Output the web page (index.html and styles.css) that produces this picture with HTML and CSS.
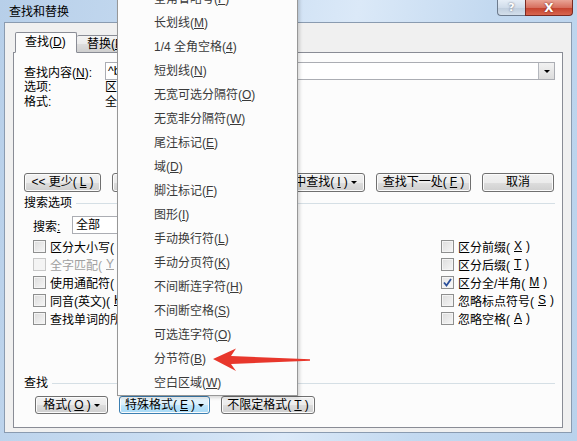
FILE: index.html
```html
<!DOCTYPE html>
<html lang="zh-CN">
<head>
  <meta charset="UTF-8">
  <title>查找和替换</title>
  <link rel="stylesheet" href="styles.css">
</head>
<body>
  <div class="window">
    <div class="titlebar">
      <span class="title">查找和替换</span>
      <div class="caption">
        <span class="cap help">?</span>
        <span class="cap close">X</span>
      </div>
    </div>

    <div class="client">
      <div class="tabs">
        <span class="tab active">查找(<u>D</u>)</span>
        <span class="tab">替换(<u>P</u>)</span>
        <span class="tab">定位(<u>G</u>)</span>
      </div>
      <div class="panel">
        <div class="find-row">
          <span class="lbl">查找内容(<u>N</u>):</span>
          <div class="combo">
            <span class="combo-text">^b</span>
            <span class="combo-btn"><i class="tri"></i></span>
          </div>
        </div>
        <div class="info">
          <div class="info-row"><span class="lbl">选项:</span><span>区分全/半角</span></div>
          <div class="info-row"><span class="lbl">格式:</span><span>全部</span></div>
        </div>

        <div class="btn-row main-btns">
          <button class="btn b-less">&lt;&lt; 更少(<u>L</u>)</button>
          <button class="btn b-read">阅读突出显示(<u>R</u>) <i class="tri"></i></button>
          <button class="btn b-in">在以下项中查找(<u>I</u>) <i class="tri"></i></button>
          <button class="btn b-next">查找下一处(<u>F</u>)</button>
          <button class="btn b-cancel">取消</button>
        </div>

        <div class="group-head first"><span>搜索选项</span></div>
        <div class="search-row">
          <span class="search-lbl">搜索<u>:</u></span>
          <div class="select">全部</div>
        </div>

        <div class="checks">
          <div class="col">
            <div class="chk"><span class="box"></span>区分大小写(<u>H</u>)</div>
            <div class="chk disabled"><span class="box"></span>全字匹配(<u>Y</u>)</div>
            <div class="chk"><span class="box"></span>使用通配符(<u>U</u>)</div>
            <div class="chk"><span class="box"></span>同音(英文)(<u>K</u>)</div>
            <div class="chk"><span class="box"></span>查找单词的所有形式(英文)(<u>W</u>)</div>
          </div>
          <div class="col">
            <div class="chk"><span class="box"></span>区分前缀(<u>X</u>)</div>
            <div class="chk"><span class="box"></span>区分后缀(<u>T</u>)</div>
            <div class="chk"><span class="box checked"><svg viewBox="0 0 9 9" width="9" height="9"><path d="M1 4.5 L3.5 7.5 L8 1" fill="none" stroke="#2a4f9a" stroke-width="1.8"/></svg></span>区分全/半角(<u>M</u>)</div>
            <div class="chk"><span class="box"></span>忽略标点符号(<u>S</u>)</div>
            <div class="chk"><span class="box"></span>忽略空格(<u>A</u>)</div>
          </div>
        </div>

        <div class="group-head second"><span>查找</span></div>
        <div class="btn-row fmt-btns">
          <button class="btn b-fmt">格式(<u>O</u>) <i class="tri"></i></button>
          <button class="btn b-special focus">特殊格式(<u>E</u>) <i class="tri"></i></button>
          <button class="btn b-nofmt">不限定格式(<u>T</u>)</button>
        </div>
      </div>
    </div>

    <ul class="menu">
      <li>全角省略号(<u>F</u>)</li>
      <li>长划线(<u>M</u>)</li>
      <li>1/4 全角空格(<u>4</u>)</li>
      <li>短划线(<u>N</u>)</li>
      <li>无宽可选分隔符(<u>O</u>)</li>
      <li>无宽非分隔符(<u>W</u>)</li>
      <li>尾注标记(<u>E</u>)</li>
      <li>域(<u>D</u>)</li>
      <li>脚注标记(<u>F</u>)</li>
      <li>图形(<u>I</u>)</li>
      <li>手动换行符(<u>L</u>)</li>
      <li>手动分页符(<u>K</u>)</li>
      <li>不间断连字符(<u>H</u>)</li>
      <li>不间断空格(<u>S</u>)</li>
      <li>可选连字符(<u>O</u>)</li>
      <li>分节符(<u>B</u>)</li>
      <li>空白区域(<u>W</u>)</li>
    </ul>

    <svg class="arrow" width="110" height="40" viewBox="205 340 110 40">
      <polygon points="213,359 236,348.5 231,356 310,359.3 310,360.8 231,364 236,371" fill="#e8372c"/>
    </svg>
  </div>
</body>
</html>
```

FILE: styles.css
```css
*{
  margin: 0;
  padding: 0;
  box-sizing: border-box;
}
body{
  width: 577px;
  height: 441px;
  overflow: hidden;
  font-family: "Liberation Sans", "Noto Sans CJK SC", sans-serif;
  font-size: 12px;
  color: #000;
}
u{
  text-decoration: underline;
  text-underline-offset: 1px;
}
.window{
  position: relative;
  width: 577px;
  height: 441px;
  display: flex;
  flex-direction: column;
  background: linear-gradient(100deg, #b7cfe9 0%, #c9ddf2 35%, #dbe9f8 55%, #c3d9f0 75%, #b9d2ec 100%);
}
.titlebar{
  height: 22px;
  display: flex;
  align-items: flex-start;
  padding-right: 4px;
}
.title{
  margin-left: 9px;
  margin-top: 3px;
  line-height: 18px;
}
.caption{
  margin-left: auto;
  display: flex;
}
.cap{
  height: 16px;
  display: flex;
  align-items: center;
  justify-content: center;
  font-family: "DejaVu Sans", sans-serif;
  font-weight: bold;
  color: #fff;
  border: 1px solid #6d7b8d;
  border-top: none;
}
.help{
  width: 28px;
  border-radius: 0 0 0 4px;
  border-right: none;
  background: linear-gradient(#e6eef7, #d0dcea 50%, #bfcddd 51%, #d3dfeb);
  font-size: 11px;
  text-shadow: 0 0 2px #556;
}
.close{
  width: 48px;
  border-radius: 0 0 4px 0;
  border-color: #7a2a22;
  background: linear-gradient(#e9a496, #d7705f 50%, #c4402c 51%, #d8664f);
  font-size: 12px;
  text-shadow: 0 0 2px #6a1a10;
}
.client{
  flex: 1;
  margin: 0 5px 8px 4px;
  background: #f0f0f0;
  border: 1px solid #8a9bb0;
  display: flex;
  flex-direction: column;
  padding: 9px 8px 4px 8px;
}
.tabs{
  display: flex;
  align-items: flex-end;
  padding-left: 2px;
  height: 21px;
  margin-bottom: -1px;
  position: relative;
  z-index: 1;
}
.tab{
  height: 18px;
  line-height: 16px;
  padding: 0 10px;
  border: 1px solid #898c95;
  border-left: none;
  border-radius: 2px 2px 0 0;
  background: linear-gradient(#f3f3f3, #ebebeb 50%, #dddddd 51%, #cfcfcf);
}
.tab.active{
  height: 21px;
  line-height: 19px;
  width: 62px;
  padding: 0 0 0 9px;
  border-left: 1px solid #898c95;
  border-bottom: 1px solid #fcfcfc;
  background: #fcfcfc;
}
.panel{
  flex: 1;
  background: #fcfcfc;
  border: 1px solid #898c95;
  display: flex;
  flex-direction: column;
  padding: 9px 7px 0 10px;
}
.find-row{
  display: flex;
  height: 18px;
  align-items: center;
}
.lbl{
  width: 81px;
  flex-shrink: 0;
}
.combo{
  flex: 1;
  height: 18px;
  border: 1px solid #abadb3;
  background: #fff;
  display: flex;
  align-items: center;
  padding-left: 2px;
}
.combo-text{
  flex: 1;
  line-height: 14px;
}
.combo-btn{
  width: 16px;
  height: 16px;
  border-left: 1px solid #b5b8be;
  background: linear-gradient(#f2f2f2, #dcdcdc);
  display: flex;
  align-items: center;
  justify-content: center;
}
.tri{
  display: inline-block;
  width: 0;
  height: 0;
  border-left: 3px solid transparent;
  border-right: 3px solid transparent;
  border-top: 3px solid #000;
  vertical-align: middle;
}
.info{
  margin-top: 0;
}
.info-row{
  display: flex;
  line-height: 15px;
}
.btn-row{
  display: flex;
  gap: 11px;
}
.main-btns{
  margin-top: 63px;
}
.btn{
  height: 19px;
  font: inherit;
  color: #000;
  line-height: 15px;
  border: 1px solid #707070;
  border-radius: 3px;
  background: linear-gradient(#f2f2f2, #ebebeb 50%, #dddddd 51%, #cfcfcf);
  box-shadow: inset 0 0 0 1px #fbfbfb;
  display: flex;
  align-items: center;
  justify-content: center;
  gap: 3px;
}
.btn.focus{
  border-color: #3c7fb1;
  background: linear-gradient(#eaf6fd, #d9f0fc 50%, #bee6fd 51%, #a7d9f5);
}
.b-less{ width: 77px; }
.b-read{ width: 115px; }
.b-in{ width: 127px; }
.b-next{ width: 95px; }
.b-cancel{ width: 72px; }
.group-head{
  display: flex;
  align-items: center;
  line-height: 14px;
}
.group-head::after{
  content: "";
  flex: 1;
  height: 1px;
  background: #d5dfe5;
  margin-left: 4px;
}
.group-head.first{
  margin-top: 4px;
}
.search-row{
  margin-top: 6px;
  padding-left: 9px;
  display: flex;
  align-items: center;
}
.search-lbl{
  width: 39px;
}
.select{
  width: 140px;
  height: 18px;
  border: 1px solid #abadb3;
  background: #fff;
  padding-left: 3px;
  line-height: 16px;
}
.checks{
  margin-top: 3px;
  padding-left: 9px;
  display: grid;
  grid-template-columns: 408px 1fr;
}
.chk{
  height: 18px;
  display: flex;
  align-items: center;
  gap: 4px;
  white-space: nowrap;
}
.box{
  width: 13px;
  height: 13px;
  border: 1px solid #8e8f8f;
  background: linear-gradient(135deg, #dcdcdc, #f6f6f6);
  box-shadow: inset 0 0 0 1px #f4f4f4;
  display: flex;
  align-items: center;
  justify-content: center;
}
.box.checked{
  background: linear-gradient(135deg, #e4e4e4, #fbfbfb);
}
.chk.disabled{
  color: #a0a0a0;
}
.chk.disabled .box{
  border-color: #c8c8c8;
  background: #f4f4f4;
}
.group-head.second{
  margin-top: 49px;
}
.fmt-btns{
  margin-top: 6px;
  padding-left: 11px;
}
.fmt-btns .btn{
  height: 18px;
}
.b-fmt{ width: 73px; }
.b-special{ width: 91px; }
.b-nofmt{ width: 94px; }

.menu{
  position: absolute;
  left: 117px;
  top: -14px;
  width: 181px;
  list-style: none;
  background: #fcfcfc;
  border: 1px solid #979797;
  box-shadow: 2px 2px 3px rgba(0,0,0,0.15);
  z-index: 5;
}
.menu li{
  height: 24px;
  line-height: 24px;
  padding-left: 36px;
  color: #3a3a3a;
  white-space: nowrap;
}
.arrow{
  position: absolute;
  left: 205px;
  top: 340px;
  z-index: 6;
}
```
